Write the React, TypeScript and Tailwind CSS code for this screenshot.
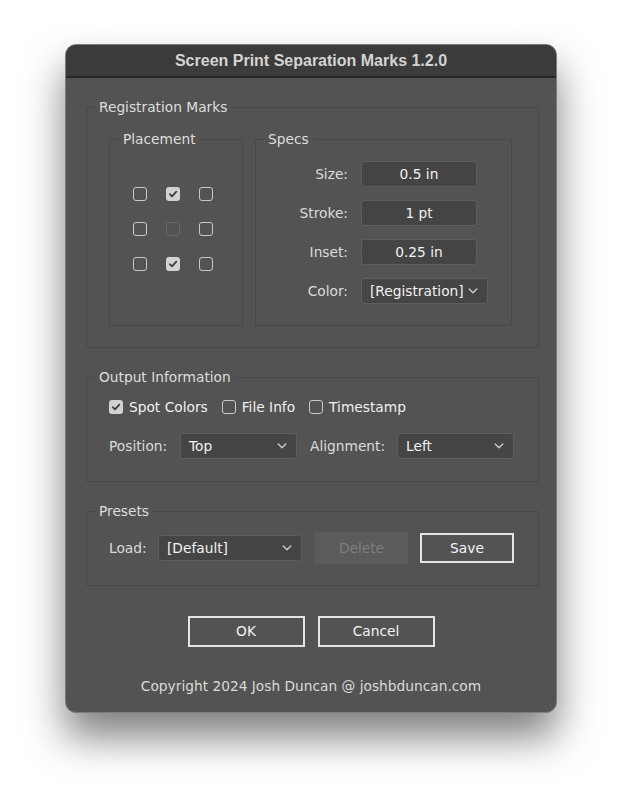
import React from "react";

const body = "font-['DejaVu_Sans',sans-serif]";

function Check({ checked = false, disabled = false }: { checked?: boolean; disabled?: boolean }) {
  if (checked) {
    return (
      <span className="flex h-[14px] w-[14px] shrink-0 items-center justify-center rounded-[3px] bg-[#d2d2d2]">
        <svg width="10" height="10" viewBox="0 0 10 10">
          <path d="M1.8 5.2 L4 7.4 L8.3 2.6" fill="none" stroke="#3a3a3a" strokeWidth="1.7" strokeLinecap="round" strokeLinejoin="round" />
        </svg>
      </span>
    );
  }
  return (
    <span
      className={
        disabled
          ? "block h-[14px] w-[14px] shrink-0 rounded-[3px] border-[1.5px] border-[#686868]"
          : "block h-[14px] w-[14px] shrink-0 rounded-[3px] border-[1.5px] border-[#c9c9c9]"
      }
    />
  );
}

function Chevron() {
  return (
    <svg width="10" height="6" viewBox="0 0 10 6" className="shrink-0">
      <path d="M1.2 1 L5 4.8 L8.8 1" fill="none" stroke="#d0d0d0" strokeWidth="1.3" strokeLinecap="round" strokeLinejoin="round" />
    </svg>
  );
}

function Field({ value }: { value: string }) {
  return (
    <div className="flex h-[26px] w-[116px] items-center justify-center rounded-[3px] border border-[#5e5e5e] bg-[#444444] text-[#f2f2f2]">
      {value}
    </div>
  );
}

function Select({ value, w }: { value: string; w: string }) {
  return (
    <div className={`flex h-[26px] ${w} items-center justify-between rounded-[3px] border border-[#5e5e5e] bg-[#454545] pl-[8px] pr-[9px] text-[#f2f2f2]`}>
      <span>{value}</span>
      <Chevron />
    </div>
  );
}

export default function App() {
  return (
    <div className={`h-[800px] w-[623px] bg-white pl-[65px] pt-[44px] ${body} text-[13.75px] text-[#dcdcdc]`}>
      <div className="flex h-[669px] w-[492px] flex-col overflow-hidden rounded-[11px] border border-[#7c7c7c] bg-[#535353] shadow-[0_24px_40px_rgba(0,0,0,0.5)]">
        {/* Title bar */}
        <div className="flex h-[33px] shrink-0 items-center justify-center border-b-2 border-[#262626] bg-[#3b3b3b] font-['Liberation_Sans',sans-serif] text-[16px] font-bold text-[#d4d4d4]">
          Screen Print Separation Marks 1.2.0
        </div>

        <div className="flex flex-col pl-[20px] pt-[20px]">
          {/* Registration Marks */}
          <fieldset className="h-[250px] w-[453px] rounded-[2px] border border-[#484848] pl-[22px] pt-[14px]">
            <legend className="-ml-[14px] px-[4px] leading-[18px] text-[#dedede]">Registration Marks</legend>
            <div className="flex">
              <fieldset className="h-[196px] w-[134px] rounded-[2px] border border-[#484848] pl-[23px] pt-[39px]">
                <legend className="-ml-[14px] px-[4px] leading-[18px] text-[#dedede]">Placement</legend>
                <div className="grid w-fit grid-cols-[14px_14px_14px] gap-x-[19px] gap-y-[21px]">
                  <Check />
                  <Check checked />
                  <Check />
                  <Check />
                  <Check disabled />
                  <Check />
                  <Check />
                  <Check checked />
                  <Check />
                </div>
              </fieldset>
              <fieldset className="ml-[12px] h-[196px] w-[257px] rounded-[2px] border border-[#484848] pl-[12px] pt-[13px]">
                <legend className="-ml-[4px] px-[4px] leading-[18px] text-[#dedede]">Specs</legend>
                <div className="flex flex-col gap-[13px]">
                  <div className="flex items-center gap-[13px]">
                    <span className="w-[80px] text-right">Size:</span>
                    <Field value="0.5 in" />
                  </div>
                  <div className="flex items-center gap-[13px]">
                    <span className="w-[80px] text-right">Stroke:</span>
                    <Field value="1 pt" />
                  </div>
                  <div className="flex items-center gap-[13px]">
                    <span className="w-[80px] text-right">Inset:</span>
                    <Field value="0.25 in" />
                  </div>
                  <div className="flex items-center gap-[13px]">
                    <span className="w-[80px] text-right">Color:</span>
                    <Select value="[Registration]" w="w-[127px]" />
                  </div>
                </div>
              </fieldset>
            </div>
          </fieldset>

          {/* Output Information */}
          <fieldset className="mt-[20px] h-[114px] w-[453px] rounded-[2px] border border-[#484848] pl-[22px] pt-[12px]">
            <legend className="-ml-[14px] px-[4px] leading-[18px] text-[#dedede]">Output Information</legend>
            <div className="flex h-[18px] items-center">
              <Check checked />
              <span className="ml-[6px] text-[#f0f0f0]">Spot Colors</span>
              <span className="ml-[14px]"><Check /></span>
              <span className="ml-[6px] text-[#f0f0f0]">File Info</span>
              <span className="ml-[14px]"><Check /></span>
              <span className="ml-[6px] text-[#f0f0f0]">Timestamp</span>
            </div>
            <div className="mt-[17px] flex items-center">
              <span className="w-[71px]">Position:</span>
              <Select value="Top" w="w-[117px]" />
              <span className="ml-[13px] w-[87px]">Alignment:</span>
              <Select value="Left" w="w-[117px]" />
            </div>
          </fieldset>

          {/* Presets */}
          <fieldset className="mt-[20px] h-[84px] w-[453px] rounded-[2px] border border-[#484848] pl-[22px] pt-[12px]">
            <legend className="-ml-[14px] px-[4px] leading-[18px] text-[#dedede]">Presets</legend>
            <div className="flex h-[32px] items-center">
              <span className="w-[49px]">Load:</span>
              <Select value="[Default]" w="w-[144px]" />
              <div className="ml-[13px] flex h-[32px] w-[93px] items-center justify-center bg-[#5b5b5b] text-[#7e7e7e]">Delete</div>
              <div className="ml-[12px] flex h-[30px] w-[94px] items-center justify-center border-2 border-[#e4e4e4] text-[#f4f4f4]">Save</div>
            </div>
          </fieldset>
        </div>

        {/* Buttons */}
        <div className="mt-[30px] flex justify-center gap-[13px]">
          <div className="flex h-[31px] w-[117px] items-center justify-center border-2 border-[#e4e4e4] text-[#f4f4f4]">OK</div>
          <div className="flex h-[31px] w-[117px] items-center justify-center border-2 border-[#e4e4e4] text-[#f4f4f4]">Cancel</div>
        </div>

        <div className="mt-[30px] text-center leading-[18px] text-[#dadada]">
          Copyright 2024 Josh Duncan @ joshbduncan.com
        </div>
      </div>
    </div>
  );
}
